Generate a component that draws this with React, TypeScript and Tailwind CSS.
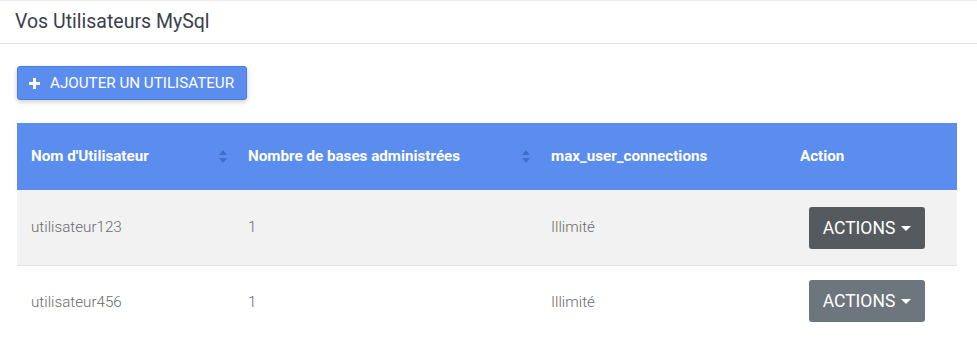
import { useState } from 'react';

type DbUser = {
    name: string;
    bases: number;
    maxConn: string;
};

const users: DbUser[] = [
    { name: 'utilisateur123', bases: 1, maxConn: 'Illimité' },
    { name: 'utilisateur456', bases: 1, maxConn: 'Illimité' },
];

function SortIcon() {
    return (
        <svg width="8" height="13" viewBox="0 0 8 13" className="flex-shrink-0">
            <path d="M4 0 L8 5 L0 5 Z" fill="#3f6fcb" />
            <path d="M4 13 L8 8 L0 8 Z" fill="#3f6fcb" />
        </svg>
    );
}

export default function App() {
    const [hovered, setHovered] = useState<number>(0);

    return (
        <div className="w-[977px] h-[341px] bg-white overflow-hidden" style={{ fontFamily: 'Roboto, "Liberation Sans", sans-serif' }}>
            {/* Card header */}
            <div className="border-t border-[#ececec] border-b border-b-[#e3e3e3] h-[44px] flex items-center px-[15px]">
                <h1 className="text-[19.5px] text-[#3b404c] font-normal">Vos Utilisateurs MySql</h1>
            </div>

            <div className="px-[17px] pt-[22px]">
                <button className="h-[34px] w-[230px] flex items-center gap-[10px] pl-[11px] bg-[#5b8def] border border-[#4a7bdc] rounded-[3px] text-white text-[15.2px] font-normal uppercase shadow-[0_2px_5px_rgba(0,0,0,0.2)]">
                    <svg width="11" height="11" viewBox="0 0 11 11">
                        <path d="M4 0h3v4h4v3H7v4H4V7H0V4h4z" fill="white" />
                    </svg>
                    Ajouter un utilisateur
                </button>

                <table className="mt-[23px] w-[940px] border-collapse text-left">
                    <thead>
                        <tr className="bg-[#5b8def] h-[67px] text-white text-[15.2px] font-bold">
                            <th className="w-[217px] pl-[14px] pr-[7px]">
                                <div className="flex items-center justify-between">
                                    <span>Nom d'Utilisateur</span>
                                    <SortIcon />
                                </div>
                            </th>
                            <th className="w-[303px] pl-[14px] pr-[7px]">
                                <div className="flex items-center justify-between">
                                    <span>Nombre de bases administrées</span>
                                    <SortIcon />
                                </div>
                            </th>
                            <th className="w-[249px] pl-[14px]">max_user_connections</th>
                            <th className="pl-[14px]">Action</th>
                        </tr>
                    </thead>
                    <tbody>
                        {users.map((u, i) => (
                            <tr
                                key={u.name}
                                onMouseEnter={() => setHovered(i)}
                                className={`h-[75px] text-[15.2px] font-light text-[#6a6a6a] ${i === 0 ? 'bg-[#f2f2f2] border-b border-[#e2e2e2]' : 'bg-white'}`}
                            >
                                <td className="pl-[14px]">{u.name}</td>
                                <td className="pl-[14px]">{u.bases}</td>
                                <td className="pl-[14px]">{u.maxConn}</td>
                                <td className="pl-[23px]">
                                    <button
                                        className={`h-[42px] w-[116px] rounded-[3px] flex items-center justify-center gap-[6px] text-white text-[17.5px] font-normal uppercase ${i === 0 ? 'mt-[2px]' : 'mb-[3px]'} ${hovered === i ? 'bg-[#555a5f]' : 'bg-[#6d757d]'}`}
                                    >
                                        Actions
                                        <svg width="10" height="5" viewBox="0 0 10 5">
                                            <path d="M0 0h10L5 5z" fill="white" />
                                        </svg>
                                    </button>
                                </td>
                            </tr>
                        ))}
                    </tbody>
                </table>
            </div>
        </div>
    );
}
